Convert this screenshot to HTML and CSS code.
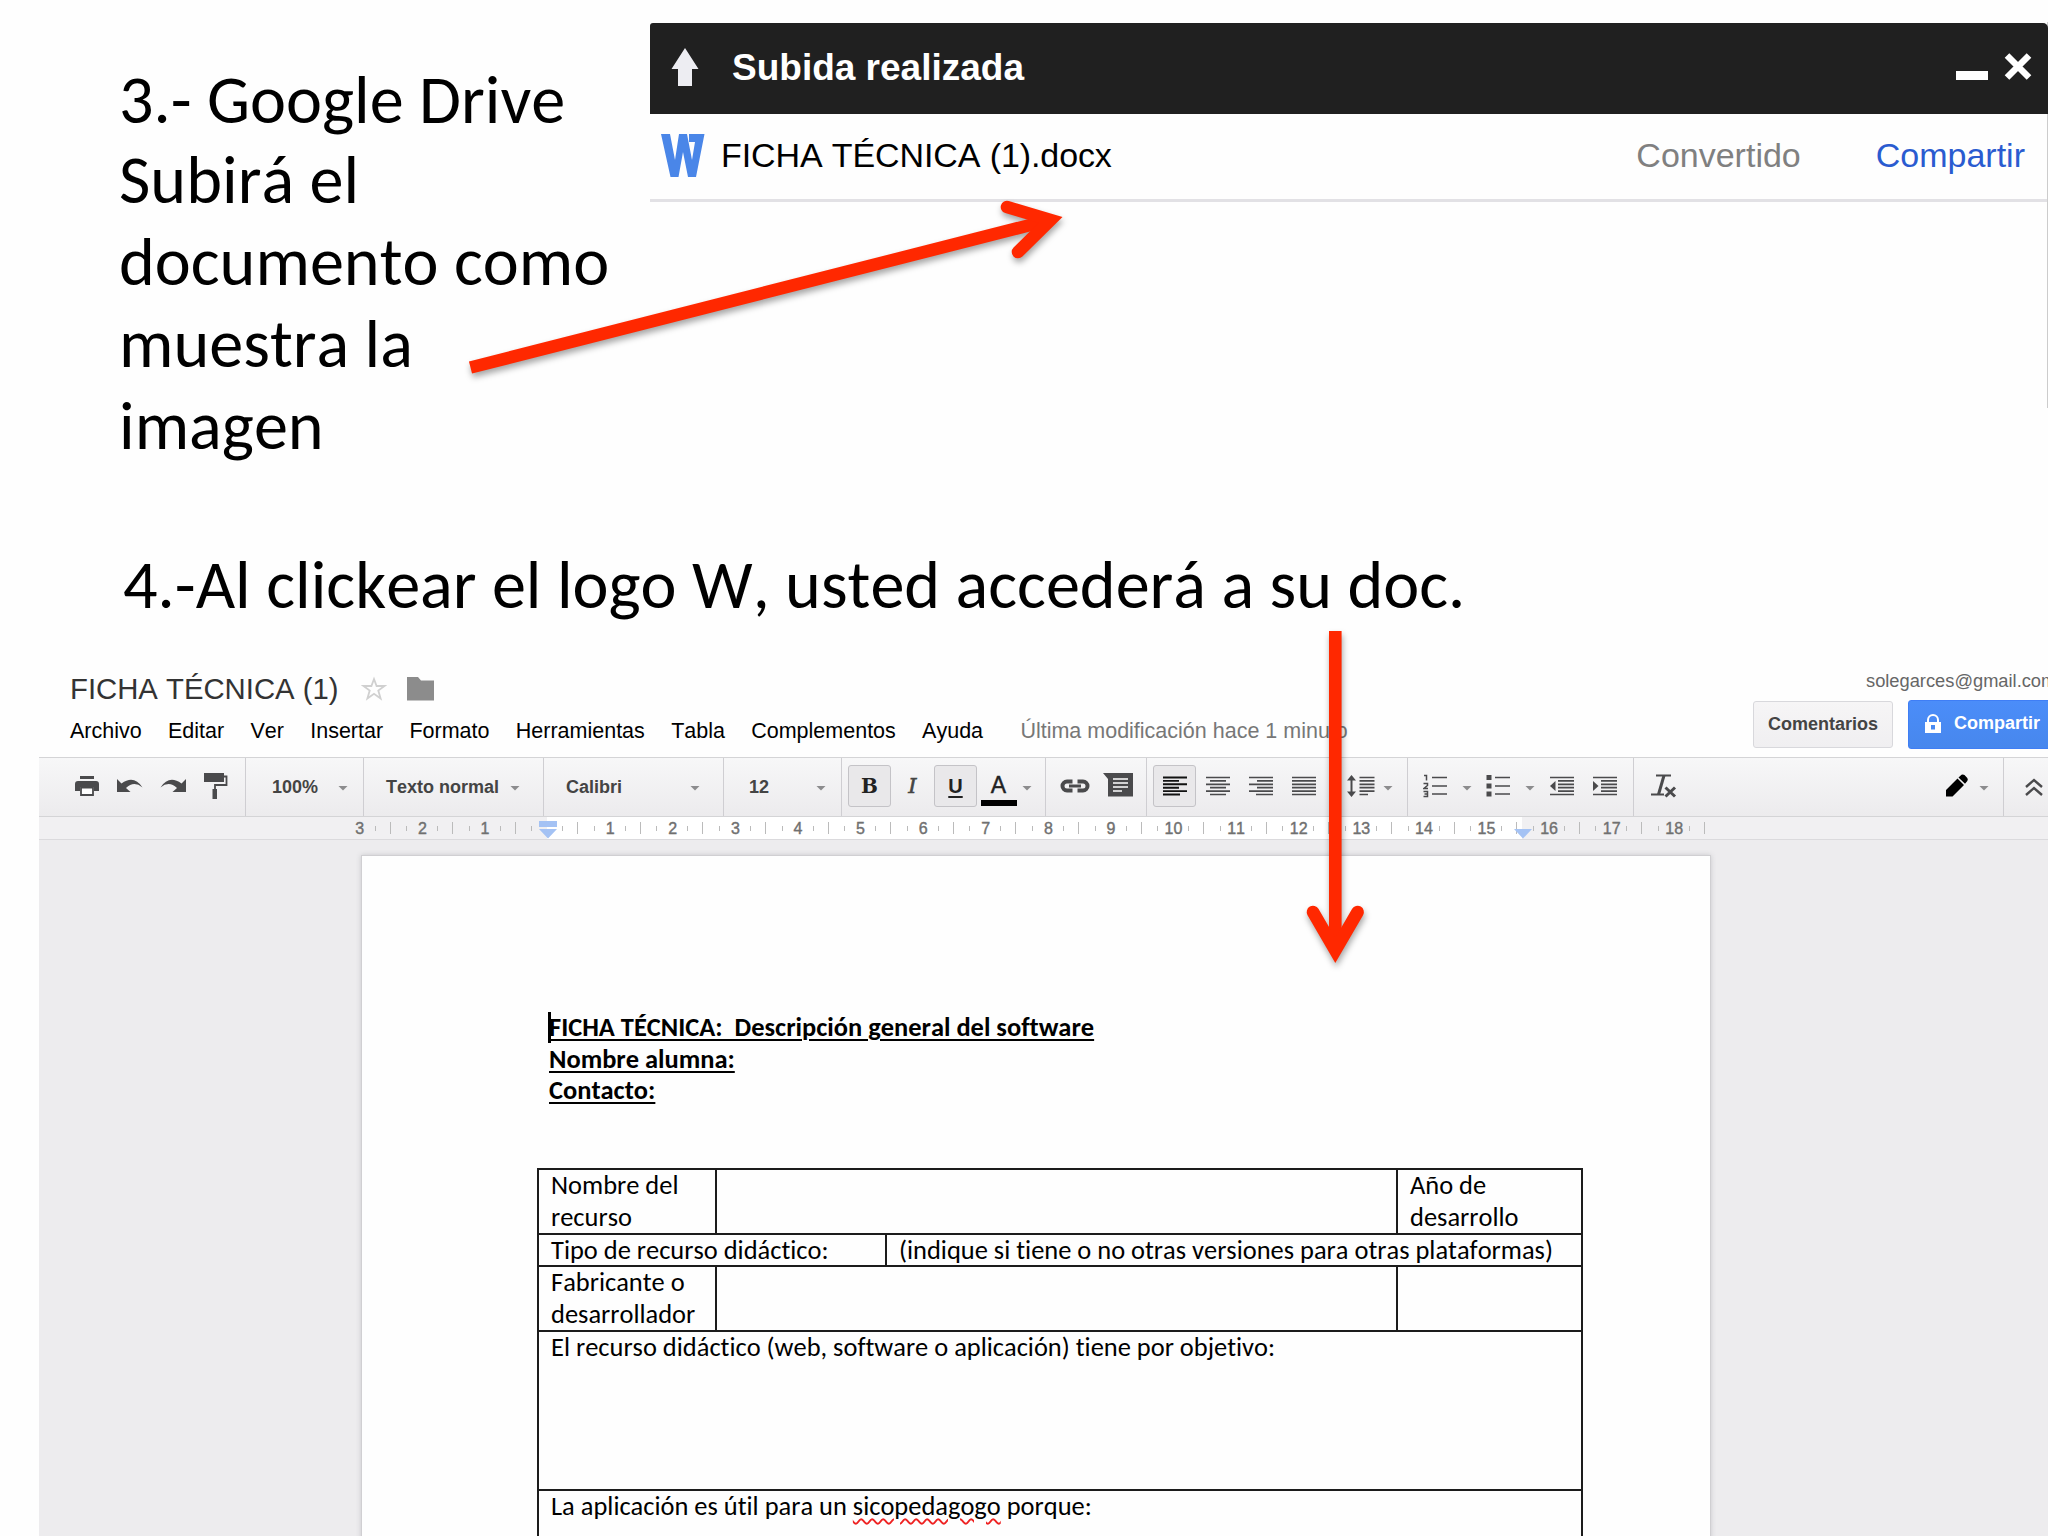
FILE: index.html
```html
<!DOCTYPE html>
<html lang="es">
    <head>
        <meta charset="utf-8">
        <title>Google Drive</title>
        <link rel="stylesheet" href="styles.css">
    </head>
    <body>
        <div class="slide">
            <section class="upload-step">
                <p class="step-text">
                    <span class="first-line">3.- Google Drive</span>
                    <span>Subirá el</span>
                    <span>documento como</span>
                    <span>muestra la</span>
                    <span>imagen</span>
                </p>
                <div class="upload-box">
                    <div class="upload-header">
                        <svg class="up-icon" width="28" height="40" viewBox="0 0 28 40"><path d="M14 0L27.5 21H21V38H7V21H.5z" fill="#ededf2"/></svg>
                        <span class="upload-title">Subida realizada</span>
                        <svg width="78" height="30" viewBox="0 0 78 30"><path d="M0 18h32v9H0z" fill="#fff"/><path d="M51 2.500L73 24.500M73 2.500L51 24.500" stroke="#fff" stroke-width="6.500"/></svg>
                    </div>
                    <div class="upload-row">
                        <svg class="w-icon" width="44" height="44" viewBox="0 0 44 44"><path d="M0 0H9L14 26 18 0H26L31 26 34 8H28V0H43.500L35 43H27L22 18 17.500 43H9.500z" fill="#4a86e8"/></svg>
                        <span class="file-name">FICHA TÉCNICA (1).docx</span>
                        <span class="status">Convertido</span>
                        <span class="share-link">Compartir</span>
                    </div>
                </div>
            </section>

            <p class="step-text step-open">4.-Al clickear el logo W, usted accederá a su doc.</p>

            <section class="docs">
                <header class="docs-header">
                    <div class="docs-left">
                        <div class="docs-title">
                            <span>FICHA TÉCNICA (1)</span>
                            <svg class="star" width="26" height="26" viewBox="0 0 26 26"><path d="M13 3L15.600 10H23.500L17.300 14.600 19.600 22.500 13 17.800 6.400 22.500 8.700 14.600 2.500 10H10.400z" fill="none" stroke="#d0d0d0" stroke-width="1.800"/></svg>
                            <svg class="folder" width="27" height="24" viewBox="0 0 27 24"><path d="M0 0H11L14 3.500H27V23.500H0z" fill="#8c8c8c"/></svg>
                        </div>
                        <nav class="menu">
                            <span>Archivo</span><span>Editar</span><span>Ver</span><span>Insertar</span><span>Formato</span><span>Herramientas</span><span>Tabla</span><span>Complementos</span><span>Ayuda</span><span class="modified">Última modificación hace 1 minuto</span>
                        </nav>
                    </div>
                    <div class="docs-right">
                        <div class="email">solegarces@gmail.com</div>
                        <div class="header-buttons">
                            <div class="comments">Comentarios</div>
                            <div class="share">
                                <svg width="16" height="20" viewBox="0 0 16 20"><path d="M3 9V6a5 5 0 0 1 10 0V9" fill="none" stroke="#fff" stroke-width="2"/><path d="M0 8H16V19H0zM6 11V15.500H10V11z" fill="#fff" fill-rule="evenodd"/></svg>
                                <span>Compartir</span>
                            </div>
                        </div>
                    </div>
                </header>

                <div class="toolbar">
                    <div class="group g-file">
                        <span class="btn"><svg width="24" height="22" viewBox="0 0 24 22"><path d="M5 1H19V4H5zM3 6H21Q24 6 24 9V16H19V12H5V16H0V9Q0 6 3 6z" fill="#4a4a4c"/><path d="M6 12.500H18V20H6z" fill="#fff" stroke="#4a4a4c" stroke-width="1.800"/></svg></span>
                        <span class="btn"><svg width="26" height="16" viewBox="0 0 26 16"><path d="M0 1L4.500 5.500Q17 -3.500 25.500 9.500Q17 2.500 9 10L13.500 14H0z" fill="#4a4a4c"/></svg></span>
                        <span class="btn"><svg width="26" height="16" viewBox="0 0 26 16"><path d="M26 1L21.500 5.500Q9 -3.500 .5 9.500Q9 2.500 17 10L12.500 14H26z" fill="#4a4a4c"/></svg></span>
                        <span class="btn"><svg width="24" height="28" viewBox="0 0 24 28"><path d="M0 1H20V10H0zM8.500 17H13V27H8.500z" fill="#4a4a4c"/><path d="M20 4.500H22.500V13H11V18" fill="none" stroke="#4a4a4c" stroke-width="1.800"/></svg></span>
                    </div>
                    <div class="group g-zoom"><span>100%</span><i class="arrow"></i></div>
                    <div class="group g-style"><span>Texto normal</span><i class="arrow"></i></div>
                    <div class="group g-font"><span>Calibri</span><i class="arrow"></i></div>
                    <div class="group g-size"><span>12</span><i class="arrow"></i></div>
                    <div class="group g-text">
                        <span class="btn on bold">B</span>
                        <span class="btn italic">I</span>
                        <span class="btn on under">U</span>
                        <span class="btn color"><b>A</b></span>
                        <i class="arrow"></i>
                    </div>
                    <div class="group g-insert">
                        <span class="btn"><svg width="30" height="14" viewBox="0 0 30 14"><path d="M12.500 2.500H7a4.500 4.500 0 0 0 0 9H12.500M17.500 2.500H23a4.500 4.500 0 0 1 0 9H17.500" fill="none" stroke="#4a4a4c" stroke-width="4"/><path d="M9 7H21" stroke="#4a4a4c" stroke-width="3"/></svg></span>
                        <span class="btn comment"><svg width="30" height="24" viewBox="0 0 30 24"><path d="M0 0H30V23.500H5V6z" fill="#4a4a4c"/><path d="M10 6H25M10 10H25M10 14H25M10 18H19" stroke="#fff" stroke-width="1.600"/></svg></span>
                    </div>
                    <div class="group g-align">
                        <span class="btn on"><svg width="24" height="20" viewBox="0 0 24 20"><path d="M0 1.500H24M0 4.900H16M0 8.300H24M0 11.700H16M0 15.100H24M0 18.500H17" stroke="#111" stroke-width="1.900"/></svg></span>
                        <span class="btn"><svg width="24" height="20" viewBox="0 0 24 20"><path d="M0 1.500H24M4 4.900H20M0 8.300H24M4 11.700H20M0 15.100H24M4 18.500H20" stroke="#4a4a4c" stroke-width="1.700"/></svg></span>
                        <span class="btn"><svg width="24" height="20" viewBox="0 0 24 20"><path d="M0 1.500H24M8 4.900H24M0 8.300H24M8 11.700H24M0 15.100H24M7 18.500H24" stroke="#4a4a4c" stroke-width="1.700"/></svg></span>
                        <span class="btn"><svg width="24" height="20" viewBox="0 0 24 20"><path d="M0 1.500H24M0 4.900H24M0 8.300H24M0 11.700H24M0 15.100H24M0 18.500H24" stroke="#4a4a4c" stroke-width="1.700"/></svg></span>
                        <span class="btn spacing"><svg width="28" height="22" viewBox="0 0 28 22"><path d="M4.500 3V19" stroke="#4a4a4c" stroke-width="2"/><path d="M4.500 0L9 5.500H0zM4.500 22L9 16.500H0z" fill="#4a4a4c"/><path d="M12.500 2.500H27.500M12.500 5.900H27.500M12.500 9.300H27.500M12.500 12.700H27.500M12.500 16.100H27.500M12.500 19.500H21" stroke="#4a4a4c" stroke-width="1.700"/></svg></span>
                        <i class="arrow"></i>
                    </div>
                    <div class="group g-list">
                        <span class="btn"><svg width="24" height="24" viewBox="0 0 24 24"><path d="M9 3.500H24M9 12H24M9 20H24" stroke="#4a4a4c" stroke-width="1.700"/><path d="M1 1.500H3.500V6.500M.5 9.500H4.500V11.500L1 14.500H5M.5 17.500H4.500V22.500H.5M1.500 20H4.500" fill="none" stroke="#4a4a4c" stroke-width="1.500"/></svg></span>
                        <i class="arrow"></i>
                        <span class="btn"><svg width="24" height="24" viewBox="0 0 24 24"><path d="M9 3.500H24M9 12H24M9 20H24" stroke="#4a4a4c" stroke-width="1.700"/><path d="M.5 1H5.500V6H.5zM.5 9.500H5.500V14.500H.5zM.5 17.500H5.500V22.500H.5z" fill="#4a4a4c"/></svg></span>
                        <i class="arrow"></i>
                        <span class="btn indent"><svg width="24" height="20" viewBox="0 0 24 20"><path d="M0 1.500H24M8 4.900H24M8 8.300H24M8 11.700H24M8 15.100H24M0 18.500H24" stroke="#4a4a4c" stroke-width="1.700"/><path d="M5.500 5V15L0 10z" fill="#4a4a4c"/></svg></span>
                        <span class="btn"><svg width="24" height="20" viewBox="0 0 24 20"><path d="M0 1.500H24M8 4.900H24M8 8.300H24M8 11.700H24M8 15.100H24M0 18.500H24" stroke="#4a4a4c" stroke-width="1.700"/><path d="M0 5V15L5.500 10z" fill="#4a4a4c"/></svg></span>
                    </div>
                    <div class="group g-mode">
                        <span class="btn"><svg width="26" height="24" viewBox="0 0 26 24"><path d="M5 1.500H20M0 20.500H13" stroke="#4a4a4c" stroke-width="1.800"/><path d="M13 1.500L7.500 20.500" stroke="#4a4a4c" stroke-width="3"/><path d="M14.500 13.500L24 22.500M24 13.500L14.500 22.500" stroke="#4a4a4c" stroke-width="3"/></svg></span>
                        <span class="btn pencil"><svg width="24" height="24" viewBox="0 0 24 24"><path d="M1 16L12.500 4.500 19 11 7.500 22.500H1zM13.500 3.500L16.500 .8Q18 0 19.500 1L22.300 4Q23.300 5.500 22.300 7L20 9.800z" fill="#000"/></svg></span>
                        <i class="arrow"></i>
                    </div>
                    <div class="group g-collapse">
                        <svg width="18" height="18" viewBox="0 0 18 18"><path d="M1 9L9 2 17 9M1 17L9 10 17 17" fill="none" stroke="#4a4a4c" stroke-width="2.400"/></svg>
                    </div>
                </div>

                <div class="ruler">
                    <span class="first">3</span><span>2</span><span>1</span><span class="zero"></span><span>1</span><span>2</span><span>3</span><span>4</span><span>5</span><span>6</span><span>7</span><span>8</span><span>9</span><span>10</span><span>11</span><span>12</span><span>13</span><span>14</span><span>15</span><span>16</span><span>17</span><span>18</span>
                    <svg class="marker marker-left" width="18" height="18" viewBox="0 0 18 18"><path d="M0 0H18V6H0zM0 8H18L9 17.500z" fill="#a4c2f4"/></svg>
                    <svg class="marker marker-right" width="18" height="18" viewBox="0 0 18 18"><path d="M0 8H18L9 17.500z" fill="#a4c2f4"/></svg>
                </div>

                <div class="canvas">
                    <div class="page">
                        <div class="heading">
                            <p><i class="caret"></i><u>FICHA TÉCNICA:&nbsp; Descripción general del software</u></p>
                            <p><u>Nombre alumna:</u></p>
                            <p><u>Contacto:</u></p>
                        </div>
                        <table>
                            <colgroup><col class="c1"><col class="c2"><col class="c3"><col class="c4"></colgroup>
                            <tr class="tall"><td>Nombre del<br>recurso</td><td colspan="2"></td><td>Año de<br>desarrollo</td></tr>
                            <tr class="short"><td colspan="2">Tipo de recurso didáctico:</td><td colspan="2">(indique si tiene o no otras versiones para otras plataformas)</td></tr>
                            <tr class="tall"><td>Fabricante o<br>desarrollador</td><td colspan="2"></td><td></td></tr>
                            <tr class="goal"><td colspan="4">El recurso didáctico (web, software o aplicación) tiene por objetivo:</td></tr>
                            <tr class="goal"><td colspan="4">La aplicación es útil para un <span class="typo">sicopedagogo</span> porque:</td></tr>
                        </table>
                    </div>
                </div>
            </section>

            <svg class="pointers" width="2048" height="1536" viewBox="0 0 2048 1536">
                <g fill="none" stroke="#ff2800" stroke-width="12.600" stroke-miterlimit="10">
                    <path d="M470.500 367.500L1046 221"/>
                    <path d="M1007 207L1050.500 220 1018 252" stroke-linecap="round"/>
                    <path d="M1335.300 631V950"/>
                    <path d="M1313 912L1335.300 950.500 1357.600 912" stroke-linecap="round"/>
                </g>
            </svg>
        </div>
    </body>
</html>
```
FILE: styles.css
```css
body {
    margin: 0;
    background: #fefefe;
    font-family: "Liberation Sans", Arial, sans-serif;
    font-kerning: none;
    font-variant-ligatures: none;
}

p {
    margin: 0;
}

svg {
    display: block;
    flex: none;
}

.slide {
    position: relative;
    width: 2048px;
    height: 1536px;
    overflow: hidden;
}

/* Slide text */
.step-text {
    font-family: Carlito, Lato, sans-serif;
    font-size: 68.2px;
    line-height: 82px;
    color: #000;
    white-space: nowrap;
}

.step-text span {
    display: block;
}

.step-text .first-line {
    height: 80px;
}

.upload-step {
    display: flex;
    height: 540px;
}

.upload-step .step-text {
    width: 531px;
    padding: 59px 0 0 119px;
}

.step-open {
    height: 82px;
    padding: 4px 0 0 123px;
}

/* Upload popup */
.upload-box {
    flex: 1;
    height: 386px;
    margin-top: 22px;
    border-right: 1px solid #ccc;
}

.upload-header {
    display: flex;
    align-items: center;
    height: 91px;
    margin-top: 1px;
    margin-right: -1px;
    padding: 0 14px 2px 21px;
    border-radius: 3px 5px 0 0;
    background: #202020;
    box-sizing: border-box;
}

.upload-title {
    flex: 1;
    margin-left: 33px;
    color: #fff;
    font-size: 37px;
    font-weight: bold;
}

.upload-row {
    display: flex;
    align-items: center;
    height: 83px;
    padding: 0 22px 2px 11px;
    border-bottom: 3px solid #e2e1e5;
    font-size: 34px;
}

.file-name {
    flex: 1;
    margin-left: 16px;
    letter-spacing: -.1px;
}

.status {
    margin-right: 75px;
    color: #808080;
}

.share-link {
    color: #2a5bd0;
}

/* Document editor */
.docs {
    margin-left: 39px;
}

.docs-header {
    display: flex;
    justify-content: space-between;
    height: 131px;
}

.docs-left {
    padding: 40px 0 0 29px;
}

.docs-title {
    display: flex;
    height: 45px;
    align-items: center;
    padding-left: 2px;
    color: #333;
    font-size: 29.3px;
}

.star {
    margin-left: 22px;
}

.folder {
    margin-left: 20px;
}

.menu {
    display: flex;
    gap: 26.3px;
    padding-left: 2px;
    font-size: 21.5px;
    line-height: 40px;
    white-space: nowrap;
}

.menu .modified {
    margin-left: 11px;
    color: #777;
}

.docs-right {
    width: 295px;
    overflow: hidden;
}

.email {
    margin: 44px 0 0 113px;
    color: #666;
    font-size: 18.3px;
    line-height: 22px;
}

.header-buttons {
    display: flex;
    gap: 15px;
    margin-top: 9px;
    font-size: 18px;
    font-weight: bold;
}

.comments {
    flex: none;
    width: 138px;
    height: 45px;
    border: 1px solid #d8d8dc;
    border-radius: 3px;
    background: linear-gradient(#f6f5f6, #f0eff1);
    color: #444;
    line-height: 45px;
    text-align: center;
}

.share {
    display: flex;
    align-items: center;
    gap: 13px;
    flex: none;
    width: 160px;
    height: 49px;
    margin-top: -1px;
    padding: 0 0 2px 16px;
    border: 1px solid #3f7ef5;
    border-radius: 3px;
    background: linear-gradient(#4b8df9, #4787ed);
    box-sizing: border-box;
    color: #fff;
}

.toolbar {
    display: flex;
    height: 58px;
    border-top: 1px solid #d4d4d6;
    border-bottom: 1px solid #d4d4d6;
    background: linear-gradient(#f7f7f8, #ecebed);
    color: #444;
    font-size: 18px;
    font-weight: bold;
}

.group {
    display: flex;
    align-items: center;
    flex: none;
    border-right: 1px solid #cfced2;
    box-sizing: border-box;
}

.btn {
    display: flex;
    align-items: center;
    justify-content: center;
    flex: none;
    width: 43px;
    height: 42px;
    margin-bottom: 2px;
    border-radius: 3px;
    box-sizing: border-box;
}

.on {
    border: 1px solid #c4c3c7;
    background: #e9e8ea;
}

.arrow {
    flex: none;
    width: 10px;
    height: 5px;
    margin: 2px 5px 0;
    background: #8c8c8e;
    clip-path: polygon(0 0, 100% 0, 50% 100%);
}

.g-zoom .arrow, .g-style .arrow, .g-font .arrow, .g-size .arrow {
    margin-left: auto;
}

.g-file { width: 207px; padding-left: 26px; }
.g-zoom { width: 118px; padding: 0 10px 0 26px; }
.g-style { width: 180px; padding: 0 18px 0 22px; }
.g-font { width: 180px; padding: 0 18px 0 22px; }
.g-size { width: 118px; padding: 0 10px 0 25px; }
.g-text { width: 204px; padding-left: 6px; }
.g-insert { width: 101px; padding-left: 7px; }
.g-align { width: 261px; padding-left: 6px; }
.g-list { width: 226px; padding-left: 5px; }
.g-mode { width: 370px; padding-left: 8px; }
.g-collapse { width: 44px; padding-left: 21px; border: 0; }

.bold {
    color: #222;
    font: 900 20px "DejaVu Serif", serif;
}

.italic {
    font: italic 21px "DejaVu Serif", serif;
    -webkit-text-stroke: .6px #444;
}

.under {
    color: #222;
    font-size: 20px;
    text-decoration: underline;
    text-decoration-thickness: 2px;
    text-underline-offset: 3px;
}

.color b {
    width: 36px;
    height: 32px;
    margin-top: 8px;
    border-bottom: 6px solid #000;
    box-sizing: border-box;
    color: #222;
    font-size: 23px;
    font-weight: normal;
    line-height: 23px;
    text-align: center;
    -webkit-text-stroke: .4px #222;
}

.color + .arrow {
    margin-left: 2px;
}

.comment {
    margin-top: -2px;
}

.spacing {
    margin-left: 14px;
}

.spacing + .arrow {
    margin-left: 1px;
}

.indent {
    margin-left: 1px;
}

.pencil {
    margin-left: auto;
}

.pencil + .arrow {
    margin: 2px 14px 0 1px;
}

.g-list .arrow {
    margin-left: 6px;
    margin-right: 4px;
}

/* Each ruler cell is one centimetre wide, centred on its number */
.ruler {
    position: relative;
    display: flex;
    height: 22px;
    padding-left: 289.5px;
    border-bottom: 1px solid #dbdadd;
    background: linear-gradient(#fff, #fff) 508px 0 / 975px 22px no-repeat #f1f0f2;
    color: #707070;
    font-size: 16px;
    line-height: 23px;
}

.ruler span {
    flex: none;
    width: 62.6px;
    background:
        linear-gradient(#bbb, #bbb) 15px 9px / 1px 5px no-repeat,
        linear-gradient(#bbb, #bbb) 46px 9px / 1px 5px no-repeat,
        linear-gradient(#bbb, #bbb) 61px 5px / 1px 12px no-repeat;
    text-align: center;
    -webkit-text-stroke: .4px #707070;
}

.ruler .first {
    background:
        linear-gradient(#bbb, #bbb) 46px 9px / 1px 5px no-repeat,
        linear-gradient(#bbb, #bbb) 61px 5px / 1px 12px no-repeat;
}

.marker {
    position: absolute;
    top: 4px;
}

.marker-left {
    left: 500px;
}

.marker-right {
    left: 1475px;
}

.canvas {
    height: 697px;
    padding: 15px 0 0 322px;
    background: #edecee;
}

.page {
    width: 1350px;
    height: 700px;
    padding: 156px 0 0 175px;
    border: 1px solid #d0cfd2;
    background: #fefefe;
    box-shadow: 0 0 5px #c8c8cb;
    box-sizing: border-box;
    color: #000;
    font-family: Carlito, Lato, sans-serif;
    font-size: 26.45px;
    line-height: 31.5px;
    white-space: nowrap;
}

.heading {
    position: relative;
    height: 156px;
    padding-left: 12px;
    font-weight: bold;
}

.heading u {
    text-decoration-thickness: 2px;
    text-underline-offset: 3px;
}

.caret {
    position: absolute;
    left: 11px;
    top: 0;
    width: 3px;
    height: 31px;
    background: #000;
}

table {
    width: 1045px;
    border-collapse: collapse;
    table-layout: fixed;
}

.c1 { width: 178px; }
.c2 { width: 170px; }
.c3 { width: 511px; }
.c4 { width: 185px; }

td {
    padding: 0 0 0 12px;
    border: 2px solid #1c1c1c;
    vertical-align: top;
}

.tall { height: 65px; }
.short { height: 32px; }
.goal { height: 159px; }

.short td {
    line-height: 30px;
}

.typo {
    text-decoration: underline wavy #e22 1.5px;
    text-underline-offset: 3px;
}

/* Red arrows drawn over the captures */
.pointers {
    position: absolute;
    left: 0;
    top: 0;
    filter: drop-shadow(1px 4px 3px rgba(0, 0, 0, .35));
}
```
